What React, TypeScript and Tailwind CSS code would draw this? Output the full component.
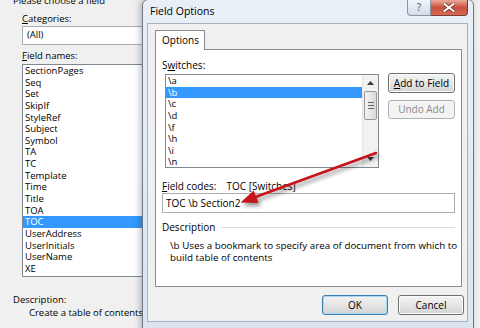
import React from 'react';

const fieldNames = [
  'SectionPages', 'Seq', 'Set', 'SkipIf', 'StyleRef', 'Subject', 'Symbol', 'TA', 'TC',
  'Template', 'Time', 'Title', 'TOA', 'TOC', 'UserAddress', 'UserInitials', 'UserName', 'XE',
];

const switches = ['\\a', '\\b', '\\c', '\\d', '\\f', '\\h', '\\i', '\\n'];

// Win7 style push button
function WinButton({ children, className = '', disabled = false, focused = false }: {
  children: React.ReactNode; className?: string; disabled?: boolean; focused?: boolean;
}) {
  if (disabled) {
    return (
      <div className={`flex items-center justify-center rounded-[3px] border border-[#adb2b5] bg-[#f4f4f4] text-[#8a8a8a] ${className}`}>
        {children}
      </div>
    );
  }
  return (
    <div
      className={`flex items-center justify-center rounded-[3px] border ${focused ? 'border-[#3c7fb1] shadow-[inset_0_0_0_1px_#a7d9f5]' : 'border-[#707070] shadow-[inset_0_0_0_1px_#fbfbfb]'} bg-linear-to-b from-[#f3f3f3] via-[#e6e6e6] to-[#d3d3d3] text-black ${className}`}
    >
      {children}
    </div>
  );
}

function Scrollbar() {
  return (
    <div className="flex w-[16px] flex-col border-l border-[#e6e6e6] bg-[#f2f2f2]">
      {/* up arrow */}
      <div className="flex h-[16px] items-center justify-center">
        <svg width="7" height="4" viewBox="0 0 7 4"><path d="M0 4 L3.5 0 L7 4 Z" fill="#3a3a3a" /></svg>
      </div>
      {/* thumb */}
      <div className="mx-[1px] flex h-[29px] flex-col items-center justify-center gap-[2px] rounded-[2px] border border-[#979797] bg-linear-to-r from-[#f4f4f4] to-[#d8d8d8]">
        <div className="h-px w-[6px] bg-[#666]" />
        <div className="h-px w-[6px] bg-[#666]" />
        <div className="h-px w-[6px] bg-[#666]" />
      </div>
      <div className="flex-1" />
      {/* down arrow */}
      <div className="flex h-[16px] items-center justify-center">
        <svg width="7" height="4" viewBox="0 0 7 4"><path d="M0 0 L7 0 L3.5 4 Z" fill="#3a3a3a" /></svg>
      </div>
    </div>
  );
}

export default function App() {
  return (
    <div className="relative h-[328px] w-[480px] overflow-hidden bg-[#f0f0f0] font-['Segoe_UI','Open_Sans',sans-serif] text-[9.5px] text-black">
      {/* Background "Field" dialog */}
      <div className="flex flex-col pl-[13px]">
        <div className="-mt-[6px] leading-[13px]">Please choose a field</div>
        <div className="ml-[9px] mt-[4.5px] leading-[13px]"><span className="underline">C</span>ategories:</div>
        <div className="ml-[9px] mt-[1.5px] flex h-[19px] w-[140px] items-center border border-[#abadb3] bg-white pl-[4px]">
          (All)
        </div>
        <div className="ml-[9px] mt-[3.5px] leading-[13px]"><span className="underline">F</span>ield names:</div>
        <div className="ml-[9px] mt-[2.5px] h-[213px] w-[122px] border border-[#828790] bg-white">
          {fieldNames.map((n) => (
            <div
              key={n}
              className={`h-[11.65px] pl-[2px] leading-[11.65px] ${n === 'TOC' ? 'bg-[#3399ff] text-white' : ''}`}
            >
              {n}
            </div>
          ))}
        </div>
        <div className="mt-[15.5px] leading-[13px]">Description:</div>
        <div className="pl-[16px] leading-[13px]">Create a table of contents</div>
      </div>

      {/* Field Options window */}
      <div className="absolute left-[142px] top-[-1px] flex h-[332px] w-[332px] flex-col rounded-t-[6px] border border-[#6d7886] bg-linear-to-b from-[#e9eff6] to-[#dbe5f0] text-[10px] shadow-[-2px_0_6px_rgba(0,0,0,0.25)]">
        {/* title bar */}
        <div className="relative flex h-[23px] items-center pl-[7px] text-[10.5px]">
          Field Options
          <div className="absolute right-[5px] top-0 flex h-[16px]">
            <div className="flex w-[24px] items-center justify-center rounded-bl-[4px] border border-t-0 border-[#8a95a3] bg-linear-to-b from-[#f2f5f9] to-[#d3dce7] text-[10px] font-semibold text-[#6a7480]">
              ?
            </div>
            <div className="flex w-[37px] items-center justify-center rounded-br-[4px] border border-l-0 border-t-0 border-[#7d3a33] bg-linear-to-b from-[#e8a99c] via-[#c9503f] to-[#d66a55]">
              <svg width="12" height="9" viewBox="0 0 12 9">
                <path d="M1.5 1 L10.5 8 M10.5 1 L1.5 8" stroke="#6b2a22" strokeWidth="3.4" strokeLinecap="square" />
                <path d="M1.5 1 L10.5 8 M10.5 1 L1.5 8" stroke="#ffffff" strokeWidth="2" strokeLinecap="square" />
              </svg>
            </div>
          </div>
        </div>

        {/* client area */}
        <div className="ml-[4px] flex h-[299px] w-[321px] flex-col border border-[#a6b2c0] bg-[#f0f0f0]">
          {/* tab */}
          <div className="pl-[7px] pt-[6px]">
            <div className="relative z-10 -mb-px flex h-[20px] w-[50px] items-center border border-b-0 border-[#898c95] bg-white pl-[6px]">
              Options
            </div>
          </div>
          {/* tab panel */}
          <div className="ml-[7px] flex h-[238px] w-[307px] flex-col border border-[#898c95] bg-white px-[6px]">
            <div className="mt-[8.5px] leading-[13px]">S<span className="underline">w</span>itches:</div>
            <div className="mt-[2.5px] flex">
              <div className="ml-[3px] flex h-[94px] w-[214px] border border-[#828790] bg-white">
                <div className="flex-1 text-[9.5px]">
                  {switches.map((s) => (
                    <div
                      key={s}
                      className={`h-[11.65px] pl-[2px] leading-[11.65px] ${s === '\\b' ? 'bg-[#3399ff] text-white' : ''}`}
                    >
                      {s}
                    </div>
                  ))}
                </div>
                <Scrollbar />
              </div>
              <div className="-mt-[1px] ml-[9px] flex flex-col gap-[7px]">
                <WinButton className="h-[20px] w-[67px]"><span><span className="underline">A</span>dd to Field</span></WinButton>
                <WinButton disabled className="h-[19px] w-[67px]">Undo Add</WinButton>
              </div>
            </div>
            <div className="mt-[11.5px] flex leading-[13px]">
              <span><span className="underline">F</span>ield codes:</span>
              <span className="ml-[10px]">TOC [Switches]</span>
            </div>
            <div className="mt-[0.5px] flex h-[20px] w-[293px] items-center border border-[#abadb3] bg-white pl-[3px]">
              TOC \b Section2
            </div>
            <div className="mt-[7.5px] flex items-center gap-[6px] leading-[13px]">
              <span>Description</span>
              <div className="h-px flex-1 bg-[#d5dfe5]" />
            </div>
            <div className="mt-[6px] whitespace-nowrap pl-[8px] text-[9.8px] leading-[12px]">
              <div>\b Uses a bookmark to specify area of document from which to</div>
              <div>build table of contents</div>
            </div>
          </div>
          {/* dialog buttons */}
          <div className="mt-[8px] flex justify-end gap-[10px] pr-[3px]">
            <WinButton focused className="h-[20px] w-[66px]">OK</WinButton>
            <WinButton className="h-[20px] w-[66px]">Cancel</WinButton>
          </div>
        </div>
      </div>

      {/* red annotation arrow */}
      <svg
        className="pointer-events-none absolute left-0 top-0 drop-shadow-[2px_3px_2px_rgba(0,0,0,0.45)]"
        width="480"
        height="328"
        viewBox="0 0 480 328"
      >
        <path d="M376 153 L254 197.5" stroke="#c7141b" strokeWidth="2.6" strokeLinecap="round" />
        <path d="M240.5 202.5 L253.8 190.4 L258.4 203 Z" fill="#c7141b" />
      </svg>
    </div>
  );
}
